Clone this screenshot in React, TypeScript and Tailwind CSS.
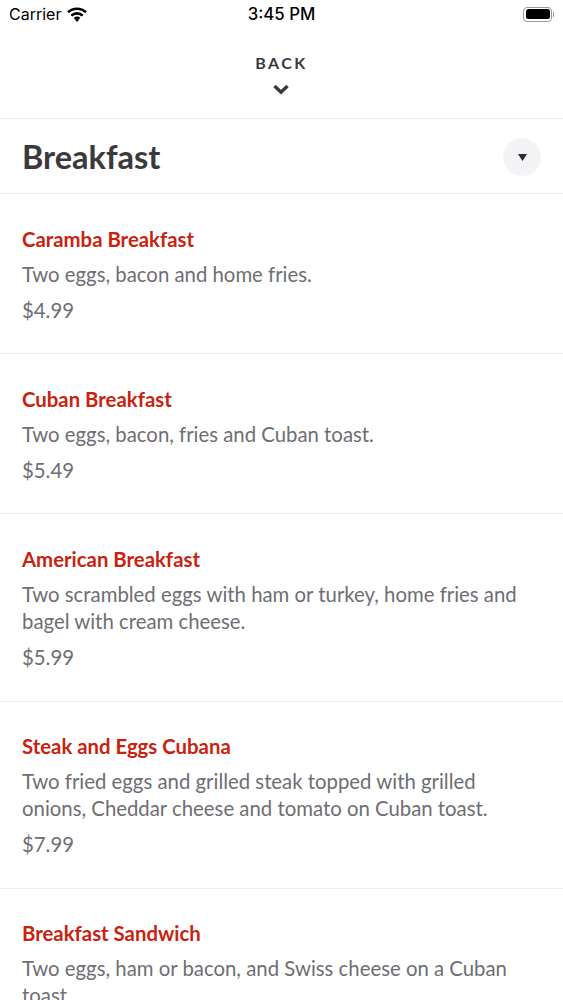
const MENU_ITEMS = [
  { name: "Caramba Breakfast", description: "Two eggs, bacon and home fries.", price: "$4.99" },
  { name: "Cuban Breakfast", description: "Two eggs, bacon, fries and Cuban toast.", price: "$5.49" },
  {
    name: "American Breakfast",
    description: "Two scrambled eggs with ham or turkey, home fries and bagel with cream cheese.",
    price: "$5.99",
  },
  {
    name: "Steak and Eggs Cubana",
    description: "Two fried eggs and grilled steak topped with grilled onions, Cheddar cheese and tomato on Cuban toast.",
    price: "$7.99",
  },
  {
    name: "Breakfast Sandwich",
    description: "Two eggs, ham or bacon, and Swiss cheese on a Cuban toast.",
    price: "$5.49",
  },
];

function WifiIcon() {
  return (
    <svg width="20" height="15" viewBox="0 0 20 15" fill="none" stroke="#000" strokeWidth="2.6">
      <path d="M1 5.2C6 .6 14 .6 19 5.2" />
      <path d="M4.3 8.6c3.300-3 8.100-3 11.400 0" />
      <path d="M7.400 11.600c1.500-1.200 3.700-1.200 5.200 0" strokeWidth="2.2" />
      <path d="M10 15l-2.200-2.400c1.300-.8 3.100-.8 4.400 0z" fill="#000" stroke="none" />
    </svg>
  );
}

function BatteryIcon() {
  return (
    <div className="flex items-center gap-[1px]">
      <div className="w-[29px] h-[15px] rounded-[4px] border border-[#9a9a9a] p-[1.5px]">
        <div className="w-full h-full rounded-[2.5px] bg-black" />
      </div>
      <div className="w-[1px] h-[5px] bg-[#9a9a9a]" />
    </div>
  );
}

export default function App() {
  return (
    <div className="w-[563px] h-[1000px] overflow-hidden bg-white font-['Lato',sans-serif]">
      <div className="relative flex items-center justify-between h-[28px] pl-[9px] pr-[9px]">
        <div className="flex items-center gap-[6px] text-[16px] text-black font-['Inter',sans-serif]">
          <span>Carrier</span>
          <WifiIcon />
        </div>
        <span className="absolute left-0 right-0 mt-[2px] text-center text-[16.800px] font-medium text-black font-['Inter',sans-serif]">
          3:45 PM
        </span>
        <BatteryIcon />
      </div>

      <div className="flex flex-col items-center h-[91px] border-b border-[#eeeeef] pt-[24px]">
        <span className="text-[16px] leading-[22px] font-bold tracking-[2.4px] text-[#3a3a3c]">BACK</span>
        <svg className="mt-[10px] mr-[2px]" width="16" height="11" viewBox="0 0 16 11" fill="none" stroke="#3a3a3c" strokeWidth="3.4">
          <path d="M1.500 2l6.500 6.200L14.500 2" />
        </svg>
      </div>

      <div className="flex items-center justify-between h-[75px] border-b border-[#eeeeef] pl-[22px] pr-[22px]">
        <h1 className="mt-[3px] text-[32.500px] font-bold leading-none text-[#3a3a3c]">Breakfast</h1>
        <div className="mt-[2px] flex items-center justify-center w-[38px] h-[38px] rounded-full bg-[#f4f3f6]">
          <svg width="9" height="7" viewBox="0 0 9 7" fill="#2c2c2e">
            <path d="M0 0h9L4.500 7z" />
          </svg>
        </div>
      </div>

      {MENU_ITEMS.map((item) => (
        <div key={item.name} className="border-b border-[#eeeeef] px-[22px] pt-[31.500px] pb-[29.700px]">
          <h2 className="text-[20.350px] font-bold leading-[27px] text-[#c9230f]">{item.name}</h2>
          <p className="mt-[8px] text-[20.350px] leading-[27px] text-[#6e6e73]">{item.description}</p>
          <p className="mt-[9px] text-[20.350px] leading-[27px] text-[#6e6e73]">{item.price}</p>
        </div>
      ))}
    </div>
  );
}
